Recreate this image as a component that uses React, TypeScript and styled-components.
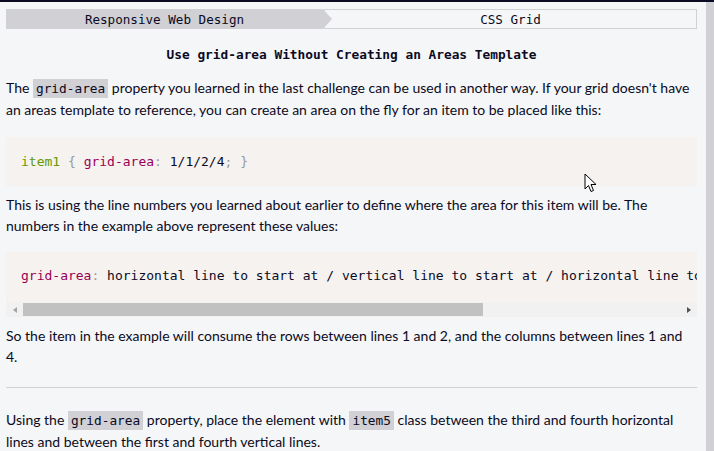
import React from "react";
import styled, { createGlobalStyle } from "styled-components";

const Global = createGlobalStyle`
  html, body { margin: 0; padding: 0; background: #f5f6f7; }
  body { font-family: Lato, "Noto Sans", sans-serif; color: #0a0a23; }
  * { box-sizing: border-box; }
`;

const mono = `"DejaVu Sans Mono", "Liberation Mono", monospace`;

const Page = styled.div`
  position: relative;
  display: flex;
  height: 451px;
  overflow: hidden;
  border-top: 2px solid #0a0a23;
  background: #f5f6f7;
`;

const Main = styled.div`
  flex: 1;
  min-width: 0;
  padding: 7px 9px 0 6px;
`;

const PageScroll = styled.div`
  width: 8px;
  background: #d0d0d5;
`;

const Crumbs = styled.nav`
  display: flex;
  height: 20px;
  font-family: ${mono};
  font-size: 12.6px;
  color: #0a0a23;
`;

const CrumbSuper = styled.div`
  width: 326px;
  flex: none;
  display: flex;
  align-items: center;
  justify-content: center;
  padding-right: 9px;
  background: #d0d0d5;
  clip-path: polygon(0 0, calc(100% - 9px) 0, 100% 50%, calc(100% - 9px) 100%, 0 100%);
  position: relative;
  z-index: 1;
`;

const CrumbSub = styled.div`
  flex: 1;
  margin-left: -8px;
  display: flex;
  align-items: center;
  justify-content: center;
  border: 1px solid #d0d0d5;
`;

const Title = styled.h1`
  margin: 17px 0 0;
  text-align: center;
  font-family: ${mono};
  font-weight: bold;
  font-size: 12.8px;
  line-height: 18px;
`;

const P = styled.p<{ $top: number }>`
  margin: ${(p) => p.$top}px 0 0;
  font-size: 14px;
  line-height: 21px;
`;

const Code = styled.code`
  font-family: ${mono};
  font-size: 12.8px;
  background: #d0d0d5;
  padding: 2px 3px;
`;

const CodeBlock = styled.div<{ $top: number }>`
  margin: ${(p) => p.$top}px 0 0;
  background: #f5f2f0;
`;

const Pre = styled.pre<{ $pad: string }>`
  margin: 0;
  font-family: ${mono};
  font-size: 13px;
  line-height: 18px;
  white-space: pre;
  overflow: hidden;
  padding: ${(p) => p.$pad};
`;

const ScrollBar = styled.div`
  display: flex;
  height: 15px;
  background: #f1f1f1;
`;

const ScrollArrow = styled.div<{ $dir: "left" | "right" }>`
  width: 17px;
  flex: none;
  display: flex;
  align-items: center;
  justify-content: center;
  &::before {
    content: "";
    border-top: 3.5px solid transparent;
    border-bottom: 3.5px solid transparent;
    ${(p) =>
      p.$dir === "left"
        ? "border-right: 4px solid #a3a3a3;"
        : "border-left: 4px solid #505050;"}
  }
`;

const Track = styled.div`
  flex: 1;
  display: flex;
  align-items: center;
`;

const Thumb = styled.div`
  height: 13px;
  background: #c1c1c1;
`;

const Tok = styled.span<{ $c: string }>`
  color: ${(p) => p.$c};
`;

const Rule = styled.hr`
  margin: 20px 0 0;
  border: none;
  border-top: 1px solid #d0d0d5;
  height: 0;
`;

const Cursor = styled.svg`
  position: absolute;
  left: 584px;
  top: 171px;
`;

export default function App() {
  const thumbRatio = 0.7;
  return (
    <>
      <Global />
      <Page>
        <Main>
          <Crumbs>
            <CrumbSuper>Responsive Web Design</CrumbSuper>
            <CrumbSub>CSS Grid</CrumbSub>
          </Crumbs>
          <Title>Use grid-area Without Creating an Areas Template</Title>
          <P $top={13}>
            The <Code>grid-area</Code> property you learned in the last challenge can be used in another way. If your
            grid doesn't have an areas template to reference, you can create an area on the fly for an item to be
            placed like this:
          </P>
          <CodeBlock $top={17}>
            <Pre $pad="16px 15px 15px 15px">
              <Tok $c="#669900">item1</Tok> <Tok $c="#999999">{"{"}</Tok> <Tok $c="#990055">grid-area</Tok>
              <Tok $c="#999999">:</Tok> 1/1/2/4<Tok $c="#999999">;</Tok> <Tok $c="#999999">{"}"}</Tok>
            </Pre>
          </CodeBlock>
          <P $top={8}>
            This is using the line numbers you learned about earlier to define where the area for this item will be.
            The numbers in the example above represent these values:
          </P>
          <CodeBlock $top={16}>
            <Pre $pad="15px 15px 17px 15px">
              <Tok $c="#990055">grid-area</Tok>
              <Tok $c="#999999">:</Tok> horizontal line to start at / vertical line to start at / horizontal line to
              end at / vertical line to end at<Tok $c="#999999">;</Tok>
            </Pre>
            <ScrollBar>
              <ScrollArrow $dir="left" />
              <Track>
                <Thumb style={{ width: `${thumbRatio * 100}%` }} />
              </Track>
              <ScrollArrow $dir="right" />
            </ScrollBar>
          </CodeBlock>
          <P $top={8}>
            So the item in the example will consume the rows between lines 1 and 2, and the columns between lines 1 and
            4.
          </P>
          <Rule />
          <P $top={21}>
            Using the <Code>grid-area</Code> property, place the element with <Code>item5</Code> class between the
            third and fourth horizontal lines and between the first and fourth vertical lines.
          </P>
        </Main>
        <PageScroll />
        <Cursor width="13" height="20" viewBox="0 0 13 20">
          <path d="M1 1 L1 16 L4.5 12.5 L7 18.5 L9.5 17.5 L7 11.5 L12 11.5 Z" fill="#fff" stroke="#000" strokeWidth="1" />
        </Cursor>
      </Page>
    </>
  );
}
